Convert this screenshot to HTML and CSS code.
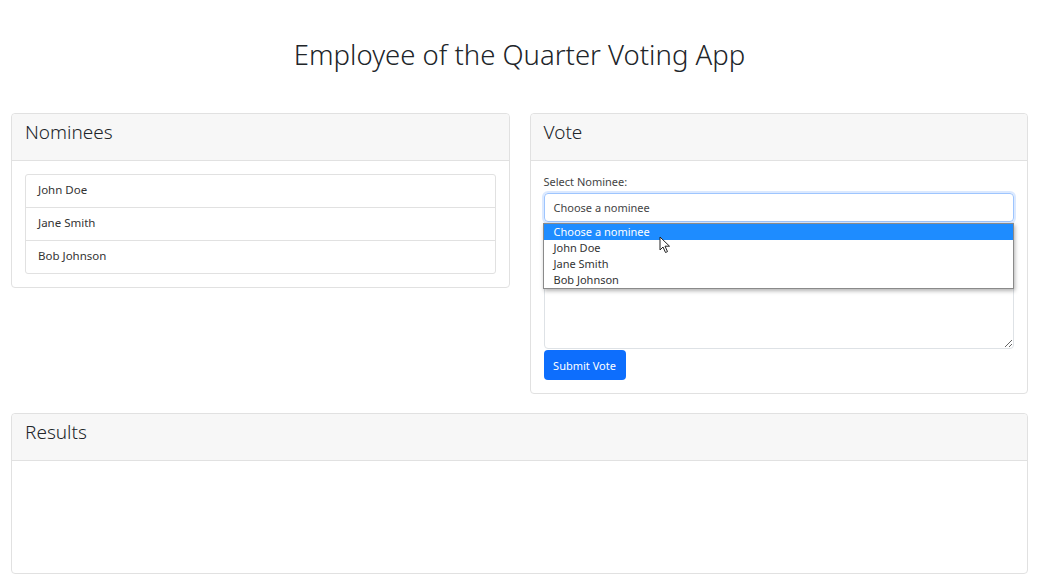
FILE: index.html
```html
<!DOCTYPE html>
<html lang="en">
<head>
    <meta charset="UTF-8">
    <meta name="viewport" content="width=device-width, initial-scale=1.0">
    <title>Employee of the Quarter Voting App</title>
    <link rel="stylesheet" href="styles.css">
</head>
<body>

<div class="container">
    <h1>Employee of the Quarter Voting App</h1>

    <div class="row">
        <div class="card nominees">
            <div class="card-header">Nominees</div>
            <div class="card-body">
                <ul class="list">
                    <li>John Doe</li>
                    <li>Jane Smith</li>
                    <li>Bob Johnson</li>
                </ul>
            </div>
        </div>

        <div class="card vote">
            <div class="card-header">Vote</div>
            <div class="card-body">
                <form id="voteForm">
                    <label for="nominee">Select Nominee:</label>
                    <div class="select-wrap">
                        <div class="select" id="nominee">Choose a nominee</div>
                        <div class="dropdown">
                            <div class="option active">Choose a nominee</div>
                            <div class="option">John Doe</div>
                            <div class="option">Jane Smith</div>
                            <div class="option">Bob Johnson</div>
                        </div>
                        <svg class="cursor" width="12" height="18" viewBox="0 0 12 18">
                            <path d="M1 1 L1 14 L4 11 L6.5 16.5 L8.5 15.6 L6 10.2 L10.5 10.2 Z" fill="#fff" stroke="#222" stroke-width="1"/>
                        </svg>
                    </div>
                    <textarea id="comment" aria-label="Comment"></textarea>
                    <button type="submit">Submit Vote</button>
                </form>
            </div>
        </div>
    </div>

    <div class="card results">
        <div class="card-header">Results</div>
        <div class="card-body" id="results"></div>
    </div>
</div>

</body>
</html>
```

FILE: styles.css
```css
body {
    font-family: "Noto Sans", Arial, sans-serif;
    color: #212529;
    background-color: #fff;
    margin: 0;
    padding: 0;
}
.container {
    padding: 0 12px 0 11px;
}
h1 {
    text-align: center;
    font-size: 27.5px;
    font-weight: 300;
    margin: 0;
    padding: 34px 0 37px;
    line-height: 42px;
}
.row {
    display: grid;
    grid-template-columns: 1fr 1fr;
    gap: 20px;
    align-items: start;
    margin-bottom: 19px;
}
.card {
    border: 1px solid #e1e1e1;
    border-radius: 4px;
    background-color: #fff;
}
.card-header {
    background-color: #f7f7f7;
    border-bottom: 1px solid #e1e1e1;
    border-radius: 4px 4px 0 0;
    height: 46px;
    padding: 0 13px;
    font-size: 19px;
    font-weight: 300;
    line-height: 36px;
}
.card-body {
    padding: 13px;
}
.list {
    list-style: none;
    margin: 0;
    padding: 0;
    border: 1px solid #e1e1e1;
    border-radius: 3px;
}
.list li {
    height: 32px;
    line-height: 30px;
    padding: 0 12px;
    font-size: 11.5px;
    color: #333;
}
.list li + li {
    border-top: 1px solid #e1e1e1;
}
label {
    display: block;
    font-size: 11px;
    color: #444;
    margin: 0 0 3px;
    line-height: 16px;
}
.select-wrap {
    position: relative;
}
.select {
    height: 27px;
    border: 1px solid #9ec5fe;
    border-radius: 4px;
    box-shadow: 0 0 0 2px rgba(13, 110, 253, 0.15);
    padding: 0 9px;
    font-size: 11px;
    line-height: 27px;
    color: #444;
}
.dropdown {
    position: absolute;
    top: 30px;
    left: -1px;
    right: 0;
    background-color: #fff;
    border: 1px solid #8a8a8a;
    box-shadow: 1px 2px 4px rgba(0, 0, 0, 0.3);
    z-index: 2;
}
.option {
    height: 16px;
    line-height: 15px;
    padding: 0 10px;
    font-size: 11px;
    color: #333;
}
.option.active {
    background-color: #1e8cff;
    color: #fff;
}
.cursor {
    position: absolute;
    left: 115px;
    top: 43px;
    z-index: 3;
}
textarea {
    display: block;
    box-sizing: border-box;
    width: 100%;
    height: 96px;
    border: 1px solid #dee2e6;
    border-radius: 4px;
    margin: 31px 0 0;
    resize: vertical;
}
button {
    margin-top: 1px;
    width: 82px;
    height: 30px;
    background-color: #0d6efd;
    color: white;
    border: none;
    border-radius: 4px;
    font-family: inherit;
    font-size: 11px;
    cursor: pointer;
}
.results .card-body {
    height: 86px;
}
```
